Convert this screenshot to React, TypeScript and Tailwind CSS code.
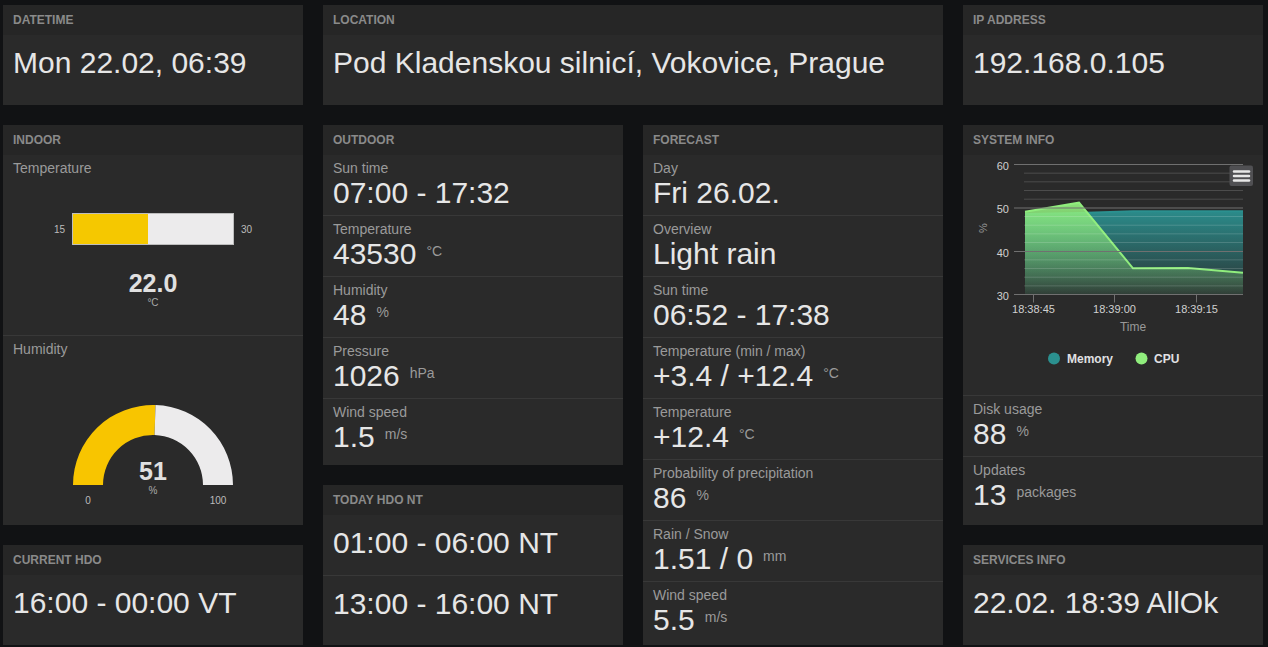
import React from "react";

const valueCls = "text-[30px] leading-[32px] text-[#e6e6e6]";
const labelCls = "text-[14px] leading-[18px] text-[#9a9a9a]";

function Panel({ title, className, children }: { title: string; className: string; children?: React.ReactNode }) {
  return (
    <div className={`flex flex-col bg-[#2a2a2a] ${className}`}>
      <div className="flex h-[30px] shrink-0 items-center bg-[#262626] px-[10px] text-[12px] font-bold uppercase text-[#8a8a8a]">
        {title}
      </div>
      {children}
    </div>
  );
}

function Row({ label, value, unit, last }: { label: string; value: string; unit?: string; last?: boolean }) {
  return (
    <div className={`${last ? "flex-1" : "h-[61px] shrink-0 border-b border-[#383838]"} px-[10px] pt-[4px]`}>
      <div className={labelCls}>{label}</div>
      <div className="flex items-start">
        <span className={valueCls}>{value}</span>
        {unit && <span className={`ml-[10px] mt-[4px] ${labelCls}`}>{unit}</span>}
      </div>
    </div>
  );
}

function Big({ text, last }: { text: string; last?: boolean }) {
  return (
    <div className={`${last ? "flex-1" : "h-[61px] shrink-0 border-b border-[#383838]"} px-[10px] pt-[12px] ${valueCls}`}>
      {text}
    </div>
  );
}

function Gauge() {
  // 51 % -> angle from the left end
  return (
    <div className="relative mx-auto mt-[47px] h-[80px] w-[160px]">
      <svg width="160" height="80" viewBox="0 0 160 80">
        <path d="M0,80 A80,80 0 0 1 82.51,0.04 L81.57,30.02 A50,50 0 0 0 30,80 Z" fill="#f8c500" />
        <path d="M82.51,0.04 A80,80 0 0 1 160,80 L130,80 A50,50 0 0 0 81.57,30.02 Z" fill="#ecebec" />
      </svg>
      <div className="absolute left-0 right-0 top-[52px] flex flex-col items-center">
        <span className="text-[25px] font-bold leading-[28px] text-[#e0e0e0]">51</span>
        <span className="text-[10px] leading-[12px] text-[#aaaaaa]">%</span>
      </div>
      <div className="absolute left-0 right-0 top-[90px] flex justify-between text-[10px] leading-[12px] text-[#bbbbbb]">
        <span className="w-[30px] text-center">0</span>
        <span className="w-[30px] text-center">100</span>
      </div>
    </div>
  );
}

function Chart() {
  const xs = [62, 116, 170, 225, 280];
  const mem = [59, 58, 56.2, 56.2, 56.2];
  const cpu = [56.7, 47.7, 113.3, 113, 117.7];
  const base = 139.5;
  const line = (ys: number[]) => xs.map((x, i) => `${i ? "L" : "M"}${x},${ys[i]}`).join(" ");
  const area = (ys: number[]) => `${line(ys)} L280,${base} L62,${base} Z`;
  const major = [9.5, 53, 96.5, 139.5];
  const minor: number[] = [];
  for (let k = 1; k < 15; k++) if (k % 5) minor.push(9.5 + k * 8.67);
  return (
    <svg width="300" height="240" viewBox="0 0 300 240" className="block">
      <defs>
        <linearGradient id="gm" x1="0" y1="0" x2="0" y2="1">
          <stop offset="0" stopColor="#2b908f" stopOpacity="0.95" />
          <stop offset="1" stopColor="#2b908f" stopOpacity="0.08" />
        </linearGradient>
        <linearGradient id="gc" x1="0" y1="0" x2="0" y2="1">
          <stop offset="0" stopColor="#90ed7d" stopOpacity="0.95" />
          <stop offset="1" stopColor="#90ed7d" stopOpacity="0.06" />
        </linearGradient>
      </defs>
      <path d={area(mem)} fill="url(#gm)" />
      <path d={line(mem)} fill="none" stroke="#2b908f" strokeWidth="2" />
      <path d={area(cpu)} fill="url(#gc)" />
      <path d={line(cpu)} fill="none" stroke="#90ed7d" strokeWidth="2" />
      {minor.map((y) => (
        <line key={y} x1="61" x2="280" y1={y} y2={y} stroke="#ffffff" strokeOpacity="0.16" />
      ))}
      {major.map((y) => (
        <line key={y} x1="51" x2="280" y1={y} y2={y} stroke="#707070" />
      ))}
      {[70.5, 151.5, 233.5].map((x) => (
        <line key={x} x1={x} x2={x} y1={base} y2={147.5} stroke="#707070" />
      ))}
      {[
        ["60", 9.5],
        ["50", 53],
        ["40", 96.5],
        ["30", 139.5],
      ].map(([t, y]) => (
        <text key={t} x="46" y={(y as number) + 5} textAnchor="end" fontSize="11" fill="#d0d0d0">
          {t}
        </text>
      ))}
      <text x="24" y="73" fontSize="11" fill="#999999" textAnchor="middle" transform="rotate(-90 24 73)">
        %
      </text>
      {[
        ["18:38:45", 70.5],
        ["18:39:00", 151.5],
        ["18:39:15", 233.5],
      ].map(([t, x]) => (
        <text key={t} x={x} y="158" textAnchor="middle" fontSize="11" fill="#d0d0d0">
          {t}
        </text>
      ))}
      <text x="170" y="176" textAnchor="middle" fontSize="12" fill="#999999">
        Time
      </text>
      <rect x="266.5" y="10.5" width="23.5" height="20.5" rx="2" fill="#505053" />
      {[16.5, 21, 25.5].map((y) => (
        <line key={y} x1="271" x2="286" y1={y} y2={y} stroke="#e8e8e8" strokeWidth="2.5" strokeLinecap="round" />
      ))}
      <circle cx="91" cy="203.5" r="6" fill="#2b908f" />
      <text x="104" y="207.5" fontSize="12" fontWeight="bold" fill="#e0e0e3">
        Memory
      </text>
      <circle cx="178.5" cy="203.5" r="6" fill="#90ed7d" />
      <text x="191" y="207.5" fontSize="12" fontWeight="bold" fill="#e0e0e3">
        CPU
      </text>
    </svg>
  );
}

export default function App() {
  return (
    <div className="h-[647px] overflow-hidden bg-[#111214] pl-[3px] pt-[5px] font-['Liberation_Sans',Arial,sans-serif]">
      <div className="flex gap-5">
        <Panel title="Datetime" className="h-[100px] w-[300px]">
          <Big text="Mon 22.02, 06:39" last />
        </Panel>
        <Panel title="Location" className="h-[100px] w-[620px]">
          <Big text="Pod Kladenskou silnicí, Vokovice, Prague" last />
        </Panel>
        <Panel title="IP address" className="h-[100px] w-[300px]">
          <Big text="192.168.0.105" last />
        </Panel>
      </div>

      <div className="mt-5 flex gap-5">
        <div className="flex w-[300px] flex-col gap-5">
          <Panel title="Indoor" className="h-[400px]">
            <div className="h-[181px] shrink-0 border-b border-[#383838] px-[10px] pt-[4px]">
              <div className={labelCls}>Temperature</div>
              <div className="mt-[36px] flex items-center justify-center gap-[7px] text-[10px] text-[#bbbbbb]">
                <span>15</span>
                <div className="flex h-[32px] w-[162px] border border-[#bdbdbd] bg-[#ecebec]">
                  <div className="h-full w-[75px] bg-[#f5c800]" />
                </div>
                <span>30</span>
              </div>
              <div className="mt-[24px] flex flex-col items-center">
                <span className="text-[25px] font-bold leading-[28px] text-[#e0e0e0]">22.0</span>
                <span className="text-[10px] leading-[12px] text-[#aaaaaa]">°C</span>
              </div>
            </div>
            <div className="flex-1 px-[10px] pt-[4px]">
              <div className={labelCls}>Humidity</div>
              <Gauge />
            </div>
          </Panel>
          <Panel title="Current HDO" className="h-[100px]">
            <Big text="16:00 - 00:00 VT" last />
          </Panel>
        </div>

        <div className="flex w-[300px] flex-col gap-5">
          <Panel title="Outdoor" className="h-[340px]">
            <Row label="Sun time" value="07:00 - 17:32" />
            <Row label="Temperature" value="43530" unit="°C" />
            <Row label="Humidity" value="48" unit="%" />
            <Row label="Pressure" value="1026" unit="hPa" />
            <Row label="Wind speed" value="1.5" unit="m/s" last />
          </Panel>
          <Panel title="Today HDO NT" className="h-[160px]">
            <Big text="01:00 - 06:00 NT" />
            <Big text="13:00 - 16:00 NT" last />
          </Panel>
        </div>

        <div className="flex w-[300px] flex-col gap-5">
          <Panel title="Forecast" className="h-[520px]">
            <Row label="Day" value="Fri 26.02." />
            <Row label="Overview" value="Light rain" />
            <Row label="Sun time" value="06:52 - 17:38" />
            <Row label="Temperature (min / max)" value="+3.4 / +12.4" unit="°C" />
            <Row label="Temperature" value="+12.4" unit="°C" />
            <Row label="Probability of precipitation" value="86" unit="%" />
            <Row label="Rain / Snow" value="1.51 / 0" unit="mm" />
            <Row label="Wind speed" value="5.5" unit="m/s" last />
          </Panel>
        </div>

        <div className="flex w-[300px] flex-col gap-5">
          <Panel title="System info" className="h-[400px]">
            <div className="h-[241px] shrink-0 border-b border-[#383838]">
              <Chart />
            </div>
            <Row label="Disk usage" value="88" unit="%" />
            <Row label="Updates" value="13" unit="packages" last />
          </Panel>
          <Panel title="Services info" className="h-[100px]">
            <Big text="22.02. 18:39 AllOk" last />
          </Panel>
        </div>
      </div>
    </div>
  );
}
